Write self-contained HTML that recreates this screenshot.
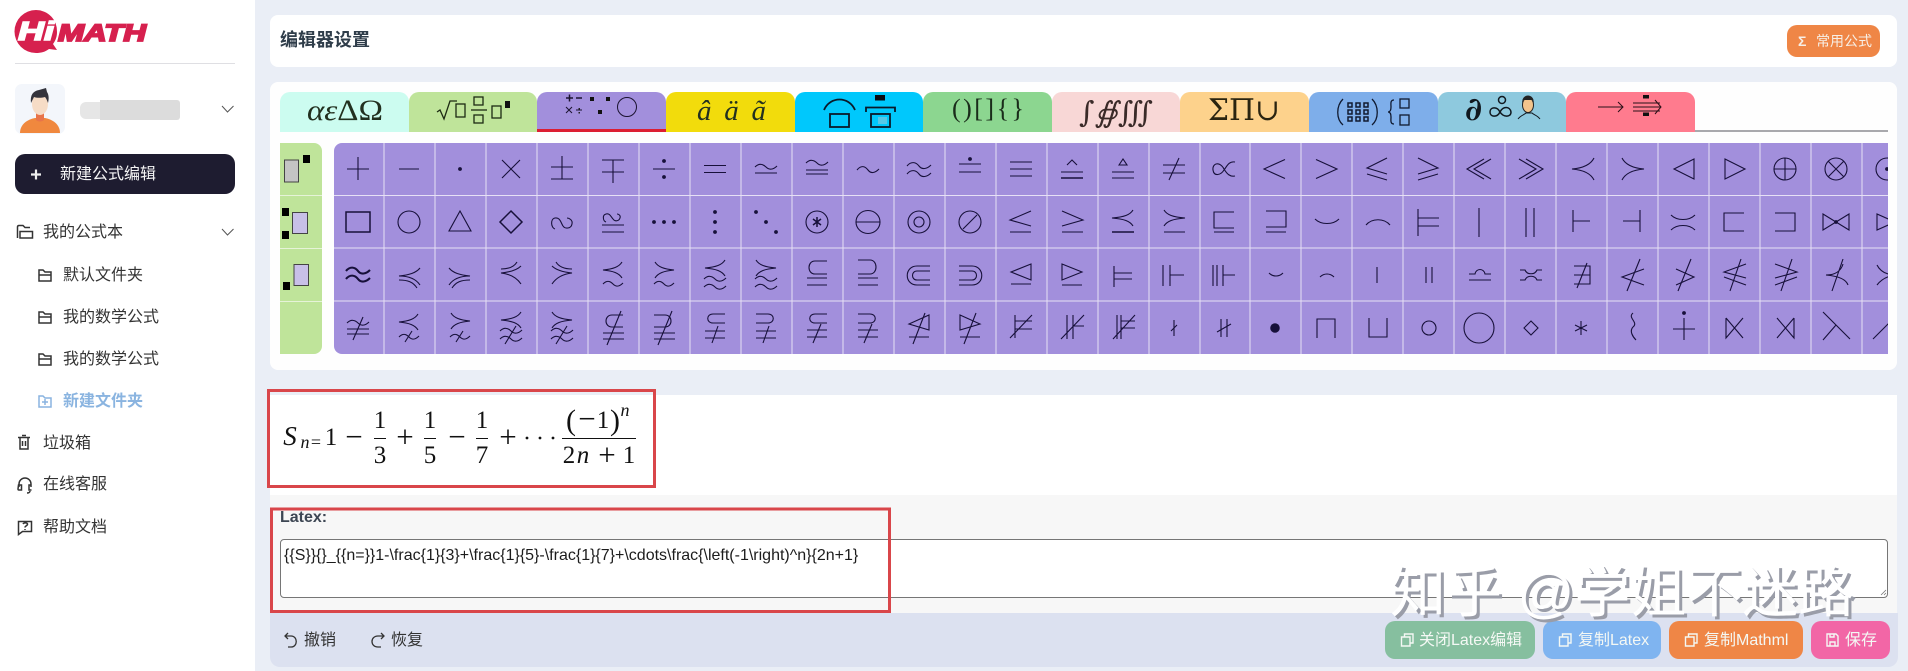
<!DOCTYPE html>
<html lang="zh">
<head>
<meta charset="utf-8">
<title>编辑器设置</title>
<style>
html,body{margin:0;padding:0;width:1908px;height:671px;overflow:hidden;background:#eaeef6;font-family:"Liberation Sans","Noto Sans CJK SC",sans-serif;color:#333}
.a{position:absolute}
.t{position:absolute;white-space:nowrap;line-height:1;font-size:16px;font-family:"Liberation Sans","Noto Sans CJK SC",sans-serif}
.card{position:absolute;background:#fff;border-radius:8px}
.tab{position:absolute;top:92px;height:40px;border-radius:10px 10px 0 0}
.btn{position:absolute;top:621px;height:38px;border-radius:10px;color:#f4f8f4}
svg{position:absolute;overflow:hidden}
#g path{fill:none;stroke:#17103a;stroke-width:1.1}
#g path.d{stroke-width:3.8;stroke-linecap:round}
#g path.b{stroke-width:2.1}
</style>
</head>
<body>
<!-- sidebar -->
<div class="a" style="left:0;top:0;width:255px;height:671px;background:#fff"></div>
<div class="a" style="left:15px;top:63px;width:220px;height:1px;background:#dfdfe3"></div>
<div class="a" style="left:15px;top:84px;width:50px;height:50px;background:#f3f6fb;border-radius:7px"></div>
<div class="a" style="left:80px;top:102px;width:22px;height:17px;background:#e6e6e6;border-radius:6px 0 0 6px"></div>
<div class="a" style="left:100px;top:100px;width:80px;height:20px;background:#dcdcdc;border-radius:0 3px 3px 0"></div>
<div class="a" style="left:15px;top:154px;width:220px;height:40px;background:#1e1c30;border-radius:10px"></div>
<div class="t" style="left:60px;top:167px;color:#f5f5f5">新建公式编辑</div>
<div class="t" style="left:43px;top:225px">我的公式本</div>
<div class="t" style="left:63px;top:268px">默认文件夹</div>
<div class="t" style="left:63px;top:310px">我的数学公式</div>
<div class="t" style="left:63px;top:352px">我的数学公式</div>
<div class="t" style="left:63px;top:394px;color:#8ab4e0;font-weight:700">新建文件夹</div>
<div class="t" style="left:43px;top:436px">垃圾箱</div>
<div class="t" style="left:43px;top:477px">在线客服</div>
<div class="t" style="left:43px;top:520px">帮助文档</div>

<!-- main cards -->
<div class="card" style="left:270px;top:15px;width:1627px;height:52px"></div>
<div class="t" style="left:280px;top:31px;font-size:18px;font-weight:700;color:#2f3d4a">编辑器设置</div>
<div class="a" style="left:1787px;top:25px;width:93px;height:32px;background:#ef8646;border-radius:10px"></div>
<div class="t" style="left:1816px;top:34px;font-size:14px;color:#f7efe6">常用公式</div>
<div class="t" style="left:1798px;top:34px;font-size:14px;font-weight:700;color:#f7efe6">Σ</div>

<div class="card" style="left:270px;top:82px;width:1627px;height:288px;background:#fefefe"></div>
<div class="tab" style="left:280px;width:129px;background:#ccfcf0"></div>
<div class="tab" style="left:409px;width:128px;background:#bfe49a"></div>
<div class="tab" style="left:537px;width:129px;background:#a28fdc;border-bottom:3px solid #dc1e32;height:37px"></div>
<div class="tab" style="left:666px;width:129px;background:#f2dc0c"></div>
<div class="tab" style="left:795px;width:128px;background:#00c8fc"></div>
<div class="tab" style="left:923px;width:129px;background:#8cd690"></div>
<div class="tab" style="left:1052px;width:128px;background:#f8d7d6"></div>
<div class="tab" style="left:1180px;width:129px;background:#fdd28c"></div>
<div class="tab" style="left:1309px;width:129px;background:#7eaeea"></div>
<div class="tab" style="left:1438px;width:128px;background:#8ec9de"></div>
<div class="tab" style="left:1566px;width:129px;background:#ff7b8e"></div>
<div class="a" style="left:1695px;top:130px;width:193px;height:2px;background:#a9a9ad"></div>

<div class="a" style="left:280px;top:143px;width:42px;height:211px;background:#bfe49a;border-radius:0 8px 8px 0"></div>
<div class="a" style="left:280px;top:195px;width:42px;height:1px;background:#e6f3d8"></div>
<div class="a" style="left:280px;top:248px;width:42px;height:1px;background:#e6f3d8"></div>
<div class="a" style="left:280px;top:301px;width:42px;height:1px;background:#e6f3d8"></div>
<div class="a" style="left:334px;top:143px;width:1554px;height:211px;background:#a28fdc;border-radius:8px 0 0 8px;overflow:hidden">
<svg id="g" viewBox="334 143 1554 211" width="1554" height="211" style="left:0;top:0">
<path style="stroke:#e6e0f5;stroke-width:1" d="M384 143V354M435 143V354M486 143V354M537 143V354M588 143V354M639 143V354M690 143V354M741 143V354M792 143V354M843 143V354M894 143V354M945 143V354M996 143V354M1047 143V354M1098 143V354M1149 143V354M1200 143V354M1250 143V354M1301 143V354M1352 143V354M1403 143V354M1454 143V354M1505 143V354M1556 143V354M1607 143V354M1658 143V354M1709 143V354M1760 143V354M1811 143V354M1862 143V354M334 195.5H1888M334 248H1888M334 301H1888"/>
<g transform="translate(0,169)">
<path transform="translate(358)" d="M-11 0H11M0-12V11"/>
<path transform="translate(409)" d="M-10 0H10"/>
<path class="d" transform="translate(460)" d="M0 0h.01"/>
<path transform="translate(511)" d="M-9-9L9 9M9-9L-9 9"/>
<path transform="translate(562)" d="M-11-2H11M0-13V10M-11 10H11"/>
<path transform="translate(613)" d="M-11-9H11M-11 3H11M0-9V14"/>
<path transform="translate(664)" d="M-11 0H11"/><path class="d" transform="translate(664)" d="M0-8h.01M0 8h.01"/>
<path transform="translate(715)" d="M-11-3.5H11M-11 3.5H11"/>
<path transform="translate(766)" d="M-11-2c4-4 8-3 11 0s7 3 11-1M-11 4H11"/>
<path transform="translate(817)" d="M-11-6c4-4 8-3 11 0s7 3 11-1M-11 1H11M-11 5H11"/>
<path transform="translate(868)" d="M-11 1c4-5 8-4 11 0s7 3 11-1"/>
<path transform="translate(919)" d="M-12-3c4-5 9-4 12 0s8 3 12-1M-12 5c4-5 9-4 12 0s8 3 12-1"/>
<path transform="translate(970)" d="M-11-5H11M-11 3H11"/><path class="d" transform="translate(970)" d="M0-10h.01"/>
<path transform="translate(1021)" d="M-11-7H11M-11 0H11M-11 7H11"/>
<path transform="translate(1072)" d="M-5-4L0-9L5-4M-11 3H11"/><path style="stroke-width:1.6" transform="translate(1072)" d="M-11 9H11"/>
<path transform="translate(1123)" d="M-4-4L0-10L4-4ZM-11 3H11M-11 9H11"/>
<path transform="translate(1174)" d="M-11-4H11M-11 4H11M5-11L-5 11"/>
<path transform="translate(1224)" d="M11-7C5-8 3-3 0 1C-3 6-10 8-11 1C-12-6-4-8 0 0C3 5 6 8 11 7"/>
<path transform="translate(1275)" d="M10-9.5L-11 0L10 9.5"/>
<path transform="translate(1326)" d="M-10-9.5L11 0L-10 9.5"/>
<path transform="translate(1377)" d="M10-11L-10-1L10 5M-10 5L10 11"/>
<path transform="translate(1428)" d="M-10-11L10-1L-10 5M10 5L-10 11"/>
<path transform="translate(1479)" d="M12-10L-5 0L12 10M5-10L-12 0L5 10"/>
<path transform="translate(1531)" d="M-12-10L5 0L-12 10M-5-10L12 0L-5 10"/>
<path transform="translate(1583)" d="M11-11c-3 6-10 10-22 11c12 1 19 5 22 11"/>
<path transform="translate(1633)" d="M-11-11c3 6 10 10 22 11c-12 1-19 5-22 11"/>
<path transform="translate(1684)" d="M10-10L-10 0L10 10Z"/>
<path transform="translate(1735)" d="M-10-10L10 0L-10 10Z"/>
<path transform="translate(1785)" d="M-11 0a11 11 0 1 0 22 0a11 11 0 1 0-22 0H11M0-11V11"/>
<path transform="translate(1836)" d="M-11 0a11 11 0 1 0 22 0a11 11 0 1 0-22 0M-8-8L8 8M8-8L-8 8"/>
<path transform="translate(1887)" d="M-11 0a11 11 0 1 0 22 0a11 11 0 1 0-22 0"/><path class="d" transform="translate(1887)" d="M0 0h.01"/>
</g>
<g transform="translate(0,222)">
<path style="stroke-width:1.5" transform="translate(358)" d="M-12-10H12V10H-12Z"/>
<path transform="translate(409)" d="M-11 0a11 11 0 1 0 22 0a11 11 0 1 0-22 0"/>
<path transform="translate(460)" d="M0-11L11 9H-11Z"/>
<path style="stroke-width:1.5" transform="translate(511)" d="M0-11L11 0L0 11L-11 0Z"/>
<path transform="translate(562)" d="M-7 7c-4-1-5-10 0-11c5-1 6 5 8 8c2 3 8 3 9-2c1-4-3-6-5-6"/>
<path transform="translate(613)" d="M-7 0c-3-1-4-7 0-8c4-1 5 3 7 5c2 3 6 2 7-1c1-3-2-4-3-4M-11 3H11M-11 10H11"/>
<path class="d" transform="translate(664)" d="M-10 0h.01M0 0h.01M10 0h.01"/>
<path class="d" transform="translate(715)" d="M0-10h.01M0 0h.01M0 10h.01"/>
<path class="d" transform="translate(766)" d="M-10-10h.01M0 0h.01M10 10h.01"/>
<path transform="translate(817)" d="M-11 0a11 11 0 1 0 22 0a11 11 0 1 0-22 0"/><path style="stroke-width:1.5" transform="translate(817)" d="M0-5V5M-4-3L4 3M4-3L-4 3"/>
<path transform="translate(868)" d="M-12 0a12 11.500 0 1 0 24 0a12 11.500 0 1 0-24 0H12"/>
<path transform="translate(919)" d="M-11 0a11 11 0 1 0 22 0a11 11 0 1 0-22 0M-5 0a5 5 0 1 0 10 0a5 5 0 1 0-10 0"/>
<path transform="translate(970)" d="M-11 0a11 11 0 1 0 22 0a11 11 0 1 0-22 0M7-7L-7 7"/>
<path transform="translate(1021)" d="M10-11L-11-2L10 4M-11 10H10"/>
<path transform="translate(1072)" d="M-10-11L11-2L-10 4M-10 10H11"/>
<path transform="translate(1123)" d="M10-12c-3 5-9 7-21 8c12 1 18 3 21 8"/><path transform="translate(1123)" style="stroke-width:1.5" d="M-11 10H11"/>
<path transform="translate(1174)" d="M-10-12c3 5 9 7 21 8c-12 1-18 3-21 8M-10 10H11"/>
<path transform="translate(1224)" d="M10-10H-10V6H10M-10 10H10"/>
<path transform="translate(1276)" d="M-10-11H10V5H-10M-10 10H10"/>
<path transform="translate(1327)" d="M-12-3c6 6 18 6 24 0"/>
<path transform="translate(1378)" d="M-12 3c6-7 18-7 24 0"/>
<path transform="translate(1428)" d="M-10-13V14M-10-4H11M-10 4H11"/>
<path transform="translate(1479)" d="M0-14V15"/>
<path transform="translate(1530)" d="M-4-14V15M4-14V15"/>
<path transform="translate(1581)" d="M-8-12V10M-8-1H9"/>
<path transform="translate(1632)" d="M8-12V10M8-1H-9"/>
<path transform="translate(1683)" d="M-12-7c6 6 18 6 24 0M-12 8c6-6 18-6 24 0"/>
<path transform="translate(1734)" d="M10-9H-10V9H10"/>
<path transform="translate(1785)" d="M-10-9H10V9H-10"/>
<path transform="translate(1836)" d="M-13-8V8L13-8V8Z"/><path class="d" transform="translate(1836)" d="M0 0h.01"/>
<path transform="translate(1887)" d="M-10-8V8L8 0Z"/>
</g>
<g transform="translate(0,275)">
<path class="b" transform="translate(358)" d="M-12-4c4-5 9-4 12 0s8 3 12-1M-12 4c4-5 9-4 12 0s8 3 12-1"/>
<path transform="translate(409)" d="M11-7c-4 5-11 7-21 8c10 0 17 3 21 9M-10 5c9 0 14 2 18 8"/>
<path transform="translate(460)" d="M-11-7c4 5 11 7 21 8c-10 0-17 3-21 9M10 5c-9 0-14 2-18 8"/>
<path transform="translate(511)" d="M10-9c-4 4-10 6-20 7c9 1 16 5 20 11M-10-6c8 0 13-2 16-7"/>
<path transform="translate(562)" d="M-10-9c4 4 10 6 20 7c-9 1-16 5-20 11M10-6c-8 0-13-2-16-7"/>
<path transform="translate(613)" d="M9-13c-3 5-9 7-19 8c10 1 16 3 19 8M-10 9c4-4 7-3 10 0s6 3 10-1"/>
<path transform="translate(664)" d="M-9-13c3 5 9 7 19 8c-10 1-16 3-19 8M-10 9c4-4 7-3 10 0s6 3 10-1"/>
<path transform="translate(715)" d="M10-15c-3 5-9 7-20 8c11 1 17 3 20 8M-11 4c4-4 8-3 11 0s7 3 11-1M-11 12c4-4 8-3 11 0s7 3 11-1"/>
<path transform="translate(766)" d="M-10-15c3 5 9 7 20 8c-11 1-17 3-20 8M-11 4c4-4 8-3 11 0s7 3 11-1M-11 12c4-4 8-3 11 0s7 3 11-1"/>
<path transform="translate(817)" d="M10-14H-2c-8 0-8 13 0 13H10M-10 3H10M-10 10H10"/>
<path transform="translate(868)" d="M-10-15H2c8 0 8 14 0 14H-10M-10 3H10M-10 10H10"/>
<path transform="translate(919)" d="M11-9H-2c-13 0-13 19 0 19H11M11-4H-2c-6 0-6 9 0 9H11"/>
<path transform="translate(970)" d="M-11-9H2c13 0 13 19 0 19H-11M-11-4H2c6 0 6 9 0 9H-11"/>
<path transform="translate(1021)" d="M10-11L-10-3L10 5ZM-10 9H10"/>
<path transform="translate(1072)" d="M-10-11L10-3L-10 5ZM-10 10H10"/>
<path transform="translate(1123)" d="M-9-9V12M-9-2H9M-9 4H9"/>
<path transform="translate(1173)" d="M-10-10V11M-3-10V11M-3 0H11"/>
<path transform="translate(1224)" d="M-11-10V11M-7-10V11M-1-10V11M-1 0H11"/>
<path transform="translate(1276)" d="M-7-2c4 4 10 4 14 0"/>
<path transform="translate(1327)" d="M-7 2c4-4 10-4 14 0"/>
<path transform="translate(1377)" d="M0-8V8"/>
<path transform="translate(1429)" d="M-3-8V8M3-8V8"/>
<path transform="translate(1480)" d="M-11-1H-5C-4-7 4-7 5-1H11M-11 5H11"/>
<path transform="translate(1531)" d="M-11-5H-6C-4 0 4 0 6-5H11M-11 5H-6C-4 0 4 0 6 5H11"/>
<path transform="translate(1582)" d="M-8-9H8V9H-8M-8 0H8M5-12L-5 13"/>
<path transform="translate(1633)" d="M11-6L-11 2L11 10M7-16L-6 16"/>
<path transform="translate(1684)" d="M-8-6L10 2L-8 10M7-16L-6 16"/>
<path transform="translate(1735)" d="M11-11L-11-3L11 3M-11 2L11 10M6-16L-5 16"/>
<path transform="translate(1786)" d="M-11-11L11-3L-11 3M11 2L-11 10M6-16L-5 16"/>
<path transform="translate(1837)" d="M-11 0C-2 0 4-4 6-11M-11 0C0 1 9 4 11 10M6-16L-5 16"/>
<path transform="translate(1888)" d="M-11-10C-8-4-2 0 8 0C-2 1-8 6-11 10"/>
</g>
<g transform="translate(0,328)">
<path transform="translate(358)" d="M-11-5c4-4 8-3 11 0s7 3 11-1M-11 1H11M-11 6H11M5-11L-5 12"/>
<path transform="translate(409)" d="M9-14c-3 5-9 7-19 8c10 1 16 3 19 8M-10 9c4-4 7-3 10 0s6 3 10-1M3 3L-4 14"/>
<path transform="translate(460)" d="M-9-15c3 5 9 7 19 8c-10 1-16 3-19 8M-10 9c4-4 7-3 10 0s6 3 10-1M3 3L-4 14"/>
<path transform="translate(511)" d="M10-16c-3 5-9 7-20 8c11 1 17 3 20 8M-11 3c4-4 8-3 11 0s7 3 11-1M-11 11c4-4 8-3 11 0s7 3 11-1M5-2L-6 16"/>
<path transform="translate(562)" d="M-10-16c3 5 9 7 20 8c-11 1-17 3-20 8M-11 3c4-4 8-3 11 0s7 3 11-1M-11 11c4-4 8-3 11 0s7 3 11-1M5-2L-6 16"/>
<path transform="translate(613)" d="M10-13H-1c-8 0-8 12 0 12H10M-10 5H11M-10 11H11M8-17L-6 17"/>
<path transform="translate(664)" d="M-10-13H1c8 0 8 12 0 12H-10M-10 5H11M-10 11H11M8-17L-6 17"/>
<path transform="translate(715)" d="M10-14H-2c-7 0-7 9 0 9H10M-10 3H10M-10 10H10M3-2L-3 15"/>
<path transform="translate(766)" d="M-10-14H2c7 0 7 9 0 9H-10M-10 3H10M-10 10H10M3-2L-3 15"/>
<path transform="translate(817)" d="M10-14H-2c-7 0-7 9 0 9H10M-10 2H10M-10 9H10M4-4L-4 15"/>
<path transform="translate(868)" d="M-10-14H2c7 0 7 9 0 9H-10M-10 2H10M-10 9H10M4-4L-4 15"/>
<path transform="translate(919)" d="M-10-4L10-13V2ZM-10 9H10M6-15L-6 16"/>
<path transform="translate(970)" d="M-10-13L10-4L-10 2ZM-10 9H10M6-15L-6 16"/>
<path transform="translate(1021)" d="M-6-13V10M-6-7H11M-6 1H11M11-13L-11 10"/>
<path transform="translate(1072)" d="M-5-13V11M1-13V11M1-2H12M12-13L-11 11"/>
<path transform="translate(1123)" d="M-6-13V11M-2-13V11M-2-7H12M-2 0H12M12-13L-10 11"/>
<path transform="translate(1174)" d="M0-8V8M-3 3L3-3"/>
<path transform="translate(1224)" d="M-3-9V9M3-9V9M-7 4L7-4"/>
<path style="stroke-width:9.5;stroke-linecap:round" transform="translate(1275)" d="M0 0h.01"/>
<path transform="translate(1326)" d="M-9 10V-9H9V10"/>
<path transform="translate(1378)" d="M-9-10V9H9V-10"/>
<path transform="translate(1429)" d="M-7 0a7 7 0 1 0 14 0a7 7 0 1 0-14 0"/>
<path transform="translate(1479)" d="M-15 0a15 15 0 1 0 30 0a15 15 0 1 0-30 0"/>
<path transform="translate(1531)" d="M0-7L7 0L0 7L-7 0Z"/>
<path transform="translate(1581)" d="M0-7V7M-6-3L6 3M6-3L-6 3"/>
<path transform="translate(1632)" d="M1-15c-6 5 6 9 0 14c-4 4 0 10 3 13"/>
<path transform="translate(1684)" d="M-11 1H11M0-10V12"/><path class="d" transform="translate(1684)" d="M0-15h.01"/>
<path transform="translate(1734)" d="M-8-10V10L9-10M-8-10L9 10"/>
<path transform="translate(1786)" d="M8-10V10L-9-10M8-10L-9 10"/>
<path transform="translate(1836)" d="M-13-16L14 11M0-3L-13 12"/>
<path transform="translate(1887)" d="M13-16L-14 11"/>
</g>
</svg>
</div>

<!-- formula card + latex area -->
<div class="a" style="left:270px;top:395px;width:1627px;height:100px;background:#fff"></div>
<div class="a" style="left:270px;top:495px;width:1627px;height:118px;background:#f7f7f7"></div>
<div class="t" style="left:280px;top:510px;font-size:16px;font-weight:700;color:#3d4653">Latex:</div>
<div class="a" style="left:280px;top:539px;width:1606px;height:57px;background:#fff;border:1px solid #767676;border-radius:4px"></div>
<div class="t" style="left:284px;top:548px;font-size:16px;color:#1c1c1c">{{S}}{}_{{n=}}1-\frac{1}{3}+\frac{1}{5}-\frac{1}{7}+\cdots\frac{\left(-1\right)^n}{2n+1}</div>
<div class="a" style="left:270px;top:613px;width:1628px;height:54px;background:#dce1f0;border-radius:0 0 10px 10px"></div>
<div class="t" style="left:304px;top:633px">撤销</div>
<div class="t" style="left:391px;top:633px">恢复</div>

<div class="btn" style="left:1385px;width:150px;background:#86bf9f"></div>
<div class="t" style="left:1419px;top:633px;color:#f4f8f4">关闭Latex编辑</div>
<div class="btn" style="left:1543px;width:118px;background:#7fb4f0"></div>
<div class="t" style="left:1578px;top:633px;color:#f4f8f4">复制Latex</div>
<div class="btn" style="left:1669px;width:134px;background:#ef8646"></div>
<div class="t" style="left:1704px;top:633px;color:#f4f8f4">复制Mathml</div>
<div class="btn" style="left:1811px;width:79px;background:#f266a6"></div>
<div class="t" style="left:1845px;top:633px;color:#f4f8f4">保存</div>

<!-- page-level vector overlay -->
<svg viewBox="0 0 1908 671" width="1908" height="671" style="left:0;top:0">
<!-- logo -->
<path d="M36 10a21 21 0 1 0 0 43c5 0 9-1 13-4l8 1l-4-6c3-4 4-8 4-12a21 21 0 0 0-21-22Z" fill="#d6204e"/>
<text x="18" y="40" font-family="Liberation Sans" font-size="26" font-weight="700" font-style="italic" fill="#fff" stroke="#fff" stroke-width="1.500" textLength="36" lengthAdjust="spacingAndGlyphs">Hi</text>
<text x="58" y="41" font-family="Liberation Sans" font-size="24" font-weight="700" font-style="italic" fill="#d6204e" stroke="#d6204e" stroke-width="1.800" textLength="88" lengthAdjust="spacingAndGlyphs">MATH</text>
<!-- avatar -->
<path d="M20 133c0-7 5-13 15-15h10c10 2 15 8 15 15Z" fill="#f0883e"/>
<path d="M36 113h8v7c-2 2-6 2-8 0Z" fill="#e8744a"/>
<ellipse cx="40" cy="104" rx="8" ry="11" fill="#f6dcc6"/>
<path d="M31 103c-1-8 2-12 8-13l7-2l1 4c2 3 2 7 1 11c-1-3-2-5-3-6c-4 1-8 1-11 0c-1 2-2 4-3 6Z" fill="#34343c"/>
<path d="M222 106l5.500 6l6-6M222 229l5.500 6l6-6" fill="none" stroke="#555" stroke-width="1"/>
<!-- button plus -->
<path d="M31 174.500h10M36 169.500v10" stroke="#eee" stroke-width="2.200" fill="none"/>
<!-- sidebar icons -->
<g fill="none" stroke="#333" stroke-width="1.500">
<path d="M17.500 238V227c0-1 .5-1.500 1.500-1.500h4l2 2h5M20 238v-6.500h12.500V238Z"/>
<path d="M39 281v-11h4l2 2h6v9ZM39 275h12"/>
<path d="M39 323v-11h4l2 2h6v9ZM39 317h12"/>
<path d="M39 365v-11h4l2 2h6v9ZM39 359h12"/>
<path stroke="#8ab4e0" d="M39 407v-11h4l2 2h6v9ZM45 399v6M42 402h6"/>
<path d="M18 437.500h12M20 437.500v11.500h8v-11.500M22 435.500h4M22.500 441v5M25.500 441v5"/>
<path d="M19 487v-3a6 6 0 0 1 12 0v3M18.500 485h3v5h-2.500c-1 0-1-1-1-1ZM31.500 485h-2.500v5h2.500M30 491c0 1-1 2-3 2"/>
<path d="M18.500 521.500h13v10h-9l-4 3ZM23 524c1-1.500 5-1.500 4.500 .5c-.3 1-2.500 1.500-2.500 3M25 529v1"/>
</g>
<!-- tab 1 -->
<text x="307" y="120" font-family="Liberation Serif" font-size="30" fill="#22301f" textLength="76" lengthAdjust="spacingAndGlyphs"><tspan font-style="italic">αε</tspan>ΔΩ</text>
<!-- tab 2 -->
<g fill="none" stroke="#1c2a12" stroke-width="1.300">
<path d="M437 112l3-2l4 9l6-18h7"/>
<rect x="456" y="104" width="9" height="13"/>
<rect x="474" y="97" width="9" height="8"/>
<path d="M471 110H487"/>
<rect x="474" y="115" width="9" height="8"/>
<rect x="492" y="106" width="9" height="12"/>
</g>
<rect x="505" y="101" width="5" height="7" fill="#111"/>
<!-- tab 3 -->
<g stroke="#1b1330" fill="none">
<path d="M566 98h7M569.500 94.500v7M576 98h6" stroke-width="1.500"/>
<path d="M566 107l6 6M572 107l-6 6M576 110h6" stroke-width="1"/>
<circle cx="627" cy="107" r="9.500" stroke-width="1"/>
</g>
<rect x="590" y="97" width="4" height="4" fill="#111"/><rect x="606" y="97" width="4" height="4" fill="#111"/><rect x="598" y="110" width="4" height="4" fill="#111"/>
<rect x="578.500" y="108" width="1.500" height="1.500" fill="#222"/><rect x="578.500" y="112" width="1.500" height="1.500" fill="#222"/>
<!-- tab 4 -->
<text x="697" y="120" font-family="Liberation Serif" font-style="italic" font-size="29" fill="#22301f" textLength="69">â ä ã</text>
<!-- tab 5 -->
<g fill="none" stroke="#0a1a2a" stroke-width="1.800">
<path d="M824 110c6-14 25-14 31 0"/>
<rect x="830" y="114" width="19" height="13"/>
<path d="M866 112v-4.500h29v4.500"/>
<rect x="871" y="114" width="19" height="13"/>
</g>
<rect x="875" y="95" width="10" height="5.500" fill="#0a0a10"/>
<rect x="878" y="117" width="9" height="7" fill="#56c8e8"/>
<!-- tab 6,7,8 -->
<text x="952" y="117" font-family="Liberation Serif" font-size="26" fill="#1a2c1a" textLength="72">()[]{}</text>
<text x="1079" y="122" font-family="DejaVu Serif, Liberation Serif" font-style="italic" font-size="29" fill="#3a2a28" textLength="74" lengthAdjust="spacingAndGlyphs">∫∯∭</text>
<text x="1208" y="120" font-family="DejaVu Serif, Liberation Serif" font-size="30" fill="#2a2410" textLength="72" lengthAdjust="spacingAndGlyphs">ΣΠ∪</text>
<!-- tab 9 -->
<g fill="none" stroke="#101a30" stroke-width="1.300">
<path d="M1343 99c-7 7-7 20 0 26M1372 99c7 7 7 20 0 26"/>
<path d="M1386 100c-4 0-3 4-3 7c0 3-1 5-3 5c2 0 3 2 3 5c0 3-1 7 3 7" transform="translate(8,0)"/>
<rect x="1400" y="99" width="9" height="9"/><rect x="1400" y="115" width="9" height="10"/>
<path stroke-width="1.500" d="M1348 103h4v4h-4ZM1356 103h4v4h-4ZM1364 103h4v4h-4ZM1348 110h4v4h-4ZM1356 110h4v4h-4ZM1364 110h4v4h-4ZM1348 117h4v4h-4ZM1356 117h4v4h-4ZM1364 117h4v4h-4Z"/>
</g>
<!-- tab 10 -->
<text x="1465" y="120" font-family="DejaVu Serif, Liberation Serif" font-weight="700" font-style="italic" font-size="32" fill="#10181f">∂</text>
<g fill="none" stroke="#10181f" stroke-width="1.500">
<circle cx="1502" cy="100" r="3.500"/>
<path d="M1500 112c-3-6-10-5-10 0c0 5 7 6 10 0c3-6 10-6 11 0c0 6-8 5-11 0Z"/>
<path stroke-width="1" d="M1518 119c3-4 6-4 8-6h6c2 2 5 2 8 6"/>
</g>
<ellipse cx="1528" cy="105" rx="5.500" ry="7.500" fill="#f2c48c" stroke="#222" stroke-width="1"/>
<path d="M1522 103c0-10 12-10 12 0l-1-3h-10Z" fill="#222"/>
<!-- tab 11 -->
<g fill="none" stroke="#2a1018" stroke-width="1">
<path d="M1598 107H1623M1618 102l5 5l-5 5"/>
<path d="M1633 103H1660M1633 107H1661M1633 111H1660M1655 100l6 7l-6 7"/>
</g>
<rect x="1643" y="95" width="6" height="3.500" fill="#111"/><rect x="1643" y="112.500" width="6" height="3.500" fill="#111"/>
<!-- left column icons -->
<rect x="284.500" y="160" width="14" height="22" fill="#c4c4c4" stroke="#444" stroke-width="1"/>
<rect x="303" y="155" width="7" height="8" fill="#000"/>
<rect x="282" y="208" width="7" height="8" fill="#000"/><rect x="282" y="231" width="7" height="8" fill="#000"/>
<rect x="292.500" y="212.500" width="15" height="21" fill="#c8c0e8" stroke="#444" stroke-width="1"/>
<rect x="294" y="264.500" width="14.500" height="21" fill="#c8c0e8" stroke="#444" stroke-width="1"/>
<rect x="283" y="282" width="7" height="8" fill="#000"/>
<!-- formula -->
<g font-family="Liberation Serif" fill="#111" text-anchor="middle" font-size="25">
<text x="290" y="445" font-size="27" font-style="italic">S</text>
<text x="305" y="448" font-size="18" font-style="italic">n</text>
<text x="316" y="448" font-size="18">=</text>
<text x="331" y="445">1</text>
<text x="354" y="447" font-size="31">−</text>
<text x="380" y="428">1</text><text x="380" y="463">3</text>
<text x="405" y="447" font-size="31">+</text>
<text x="430" y="428">1</text><text x="430" y="463">5</text>
<text x="457" y="447" font-size="31">−</text>
<text x="482" y="428">1</text><text x="482" y="463">7</text>
<text x="508" y="447" font-size="31">+</text>
<text x="571" y="430" font-size="30" font-weight="400">(</text>
<text x="587" y="429" font-size="31">−</text>
<text x="603" y="428">1</text>
<text x="615" y="430" font-size="30">)</text>
<text x="625" y="416" font-size="18" font-style="italic">n</text>
<text x="569" y="463">2</text>
<text x="583" y="463" font-style="italic">n</text>
<text x="607" y="465" font-size="31">+</text>
<text x="629" y="463">1</text>
</g>
<path d="M374 438.500H386M424 438.500H436M476 438.500H488M562 438.500H636" stroke="#111" stroke-width="1"/>
<circle cx="527" cy="438" r="1.400" fill="#111"/><circle cx="540" cy="438" r="1.400" fill="#111"/><circle cx="553" cy="438" r="1.400" fill="#111"/>
<!-- undo/redo & small icons -->
<g fill="none" stroke="#333" stroke-width="1.300">
<path d="M288 633l-3 3l3 3M285 636h6c7 0 7 11 0 11h-3"/>
<path d="M381 633l3 3l-3 3M384 636h-6c-8 0-8 11 0 11h3"/>
<path d="M1884 595l2-2M1881 595l5-5" stroke="#777" stroke-width=".8"/>
</g>
<g fill="none" stroke="#f4f8f4" stroke-width="1.400">
<path d="M1401.500 637h8.500v9h-8.500ZM1404.500 637v-3h8.500v9h-3"/>
<path d="M1559.500 637h8.500v9h-8.500ZM1562.500 637v-3h8.500v9h-3"/>
<path d="M1685.500 637h8.500v9h-8.500ZM1688.500 637v-3h8.500v9h-3"/>
<path d="M1827 634h9l2 2v10h-11ZM1830 646v-4h5v4M1830 634v3h4v-3"/>
</g>
<!-- red annotation boxes -->
<rect x="268.500" y="390.500" width="386" height="96" fill="none" stroke="#d9464a" stroke-width="3"/>
<rect x="271.500" y="509" width="618" height="102.500" fill="none" stroke="#d9464a" stroke-width="3"/>
</svg>

<!-- watermark -->
<div class="t" style="left:1390px;top:565px;font-size:56px;color:#fff;text-shadow:3px 3px 0 #9a9da8;font-family:'Liberation Sans','Noto Sans CJK SC',sans-serif">知乎 @学姐不迷路</div>
</body>
</html>
